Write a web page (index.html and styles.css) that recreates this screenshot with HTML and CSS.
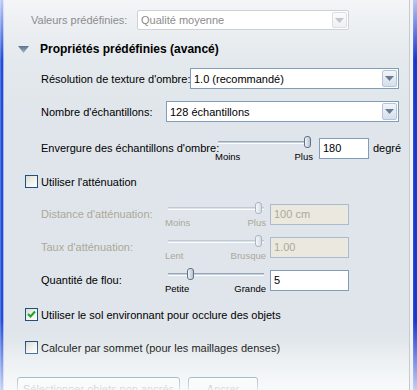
FILE: index.html
```html
<!DOCTYPE html>
<html lang="fr">
<head>
    <meta charset="UTF-8">
    <title>Propriétés prédéfinies</title>
    <link rel="stylesheet" href="styles.css">
</head>
<body>
    <div class="window">
        <div class="edge edge-left"></div>
        <div class="pane">

            <div class="row preset-row">
                <span class="label muted preset-label">Valeurs prédéfinies:</span>
                <div class="combo combo-off preset-combo">
                    <span class="combo-text">Qualité moyenne</span>
                    <span class="combo-btn"><svg width="9" height="5" viewBox="0 0 9 5"><polygon points="0,0 9,0 4.5,5" /></svg></span>
                </div>
            </div>

            <div class="section-head">
                <svg class="caret" width="11" height="7" viewBox="0 0 11 7">
                    <defs>
                        <linearGradient id="cg" x1="0" y1="0" x2="0" y2="1">
                            <stop offset="0" stop-color="#5c7290" />
                            <stop offset="1" stop-color="#a7b5c6" />
                        </linearGradient>
                    </defs>
                    <polygon points="0,0 11,0 5.5,7" fill="url(#cg)" />
                </svg>
                <span>Propriétés prédéfinies (avancé)</span>
            </div>

            <div class="row field-row res-row">
                <span class="label res-label">Résolution de texture d'ombre:</span>
                <div class="combo res-combo">
                    <span class="combo-text">1.0 (recommandé)</span>
                    <span class="combo-btn"><svg width="9" height="5" viewBox="0 0 9 5"><polygon points="0,0 9,0 4.5,5" /></svg></span>
                </div>
            </div>

            <div class="row field-row count-row">
                <span class="label count-label">Nombre d'échantillons:</span>
                <div class="combo count-combo">
                    <span class="combo-text">128 échantillons</span>
                    <span class="combo-btn"><svg width="9" height="5" viewBox="0 0 9 5"><polygon points="0,0 9,0 4.5,5" /></svg></span>
                </div>
            </div>

            <div class="slider-row spread-row">
                <span class="label spread-label">Envergure des échantillons d'ombre:</span>
                <div class="slider spread-slider">
                    <div class="track"><span class="thumb" style="left: 86px"></span></div>
                    <div class="ticks"><span>Moins</span><span>Plus</span></div>
                </div>
                <div class="textbox spread-box">180</div>
                <span class="unit">degré</span>
            </div>

            <div class="check-row falloff-check">
                <span class="checkbox"></span>
                <span>Utiliser l'atténuation</span>
            </div>

            <div class="slider-row off distance-row">
                <span class="label short-label">Distance d'atténuation:</span>
                <div class="slider">
                    <div class="track"><span class="thumb" style="left: 87px"></span></div>
                    <div class="ticks"><span>Moins</span><span>Plus</span></div>
                </div>
                <div class="textbox">100 cm</div>
            </div>

            <div class="slider-row off rate-row">
                <span class="label short-label">Taux d'atténuation:</span>
                <div class="slider">
                    <div class="track"><span class="thumb" style="left: 87px"></span></div>
                    <div class="ticks"><span>Lent</span><span>Brusque</span></div>
                </div>
                <div class="textbox">1.00</div>
            </div>

            <div class="slider-row blur-row">
                <span class="label short-label">Quantité de flou:</span>
                <div class="slider">
                    <div class="track"><span class="thumb" style="left: 19px"></span></div>
                    <div class="ticks"><span>Petite</span><span>Grande</span></div>
                </div>
                <div class="textbox">5</div>
            </div>

            <div class="check-row ground-check">
                <span class="checkbox checked">
                    <svg width="11" height="11" viewBox="0 0 11 11"><polyline points="2,5 4.5,7.5 9,2.5" fill="none" stroke="#21a121" stroke-width="2" /></svg>
                </span>
                <span>Utiliser le sol environnant pour occlure des objets</span>
            </div>

            <div class="check-row vertex-check">
                <span class="checkbox"></span>
                <span>Calculer par sommet (pour les maillages denses)</span>
            </div>

            <div class="button-row">
                <button class="xp-button wide">Sélectionner objets non ancrés</button>
                <button class="xp-button">Ancrer</button>
            </div>
        </div>
        <div class="divider"></div>
        <div class="edge edge-right"></div>
    </div>
</body>
</html>
```

FILE: styles.css
```css
body {
    margin: 0;
    font-family: "Liberation Sans", Arial, sans-serif;
    font-size: 11px;
    color: #000;
    background: #fff;
}
.window {
    display: flex;
    width: 417px;
    height: 390px;
    overflow: hidden;
}
.edge {
    width: 4px;
    flex: none;
}
.edge-left {
    background: linear-gradient(to right, #7e9be6 0, #2452dc 1px, #1f47d4 3px, #9fb3ee 3px);
}
.edge-left,
.edge-right {
    position: relative;
}
.edge-left::after,
.edge-right::after {
    content: "";
    position: absolute;
    left: 0;
    right: 0;
    top: 0;
    bottom: 0;
    background: linear-gradient(to bottom, rgba(255,255,255,0.7) 0, rgba(255,255,255,0) 60px, rgba(255,255,255,0) 320px, rgba(255,255,255,0.75) 390px);
}
.edge-right {
    background: linear-gradient(to right, #3456de 0, #1234c8 2px, #1a3bcf 4px);
}
.divider {
    width: 4px;
    flex: none;
    border-left: 1px solid #c6cbd0;
    box-sizing: border-box;
    background: #f1f3f5;
}
.pane {
    position: relative;
    flex: 1;
    background: linear-gradient(to bottom, #f3f5f7 0, #e4e9ed 60px, #dfe5ea 120px, #dfe5ea 330px, #e6ebee 360px);
    padding-top: 10px;
}
.pane::after {
    content: "";
    position: absolute;
    left: 0;
    right: 0;
    bottom: 0;
    height: 48px;
    background: linear-gradient(to bottom, rgba(250,251,252,0) 0, rgba(250,251,252,0.9) 100%);
    pointer-events: none;
}

/* rows */
.row {
    display: flex;
    align-items: center;
}
.label {
    flex: none;
    white-space: nowrap;
}
.muted {
    color: #8c8c8c;
}
.preset-row {
    height: 20px;
    margin-left: 27px;
}
.preset-label {
    width: 106px;
}
.section-head {
    display: flex;
    align-items: center;
    height: 14px;
    margin-top: 12px;
    margin-left: 14px;
    font-weight: bold;
    font-size: 12px;
}
.caret {
    margin-right: 11px;
    margin-top: 1px;
}
.field-row {
    height: 21px;
    margin-left: 37px;
}
.res-row {
    margin-top: 12px;
}
.res-label {
    width: 149px;
}
.count-row {
    margin-top: 12px;
}
.count-label {
    width: 125px;
}

/* combo boxes */
.combo {
    display: flex;
    align-items: center;
    height: 100%;
    box-sizing: border-box;
    border: 1px solid #7f9db9;
    background: #fff;
    padding: 1px;
}
.combo-text {
    flex: 1;
    padding-left: 2px;
}
.combo-btn {
    display: flex;
    align-items: center;
    justify-content: center;
    width: 15px;
    height: 100%;
    box-sizing: border-box;
    border: 1px solid #b6c4d6;
    border-radius: 2px;
    background: linear-gradient(to bottom, #f2f5fa, #d5dfea);
    fill: #6b7b92;
}
.res-combo {
    width: 209px;
}
.count-combo {
    width: 233px;
}
.preset-combo {
    width: 212px;
}
.combo-off {
    border-color: #cfd2d4;
    border-radius: 2px;
    color: #8c8c8c;
}
.combo-off .combo-btn {
    border-color: #dcdfe2;
    background: linear-gradient(to bottom, #fbfbfb, #eef0f2);
    fill: #c2c6ca;
}

/* sliders */
.slider-row {
    display: flex;
    align-items: flex-start;
    height: 26px;
    margin-left: 37px;
}
.slider-row .label {
    padding-top: 6px;
}
.spread-row {
    margin-top: 14px;
}
.spread-label {
    width: 174px;
}
.short-label {
    width: 124px;
}
.slider {
    flex: none;
    width: 101px;
}
.spread-slider {
    width: 98px;
}
.track {
    position: relative;
    height: 3px;
    margin: 5px 2px 0 3px;
    box-sizing: border-box;
    border-top: 1px solid #98a8ba;
    border-bottom: 1px solid #fbfcfd;
    background: #c3ceda;
}
.thumb {
    position: absolute;
    top: -6px;
    width: 7px;
    height: 12px;
    box-sizing: border-box;
    border: 1px solid #5f7189;
    border-radius: 3px;
    background: linear-gradient(to right, #f3f5f8, #b4c1d0);
}
.ticks {
    display: flex;
    justify-content: space-between;
    margin-top: 8px;
    font-size: 9.5px;
    line-height: 10px;
}
.textbox {
    flex: none;
    width: 79px;
    height: 21px;
    margin-top: 2px;
    margin-left: 4px;
    box-sizing: border-box;
    border: 1px solid #7f9db9;
    background: #fff;
    padding: 3px 0 0 3px;
}
.spread-box {
    width: 50px;
    margin-left: 6px;
}
.unit {
    margin-left: 4px;
    padding-top: 6px;
}
.off {
    color: #aca899;
}
.off .textbox {
    background: #ebe9df;
    border-color: #a9bccf;
}
.off .track {
    border-top-color: #c1cad4;
    background: #dde3e9;
}
.off .thumb {
    border-color: #aab6c3;
    background: linear-gradient(to right, #f6f7f9, #d6dde5);
}
.distance-row {
    margin-top: 14px;
}
.rate-row,
.blur-row {
    margin-top: 7px;
}

/* check boxes */
.check-row {
    display: flex;
    align-items: center;
    height: 13px;
    margin-left: 21px;
}
.checkbox {
    display: flex;
    align-items: center;
    justify-content: center;
    flex: none;
    width: 13px;
    height: 13px;
    box-sizing: border-box;
    border: 1px solid #1c5180;
    background: linear-gradient(135deg, #dcdcd5 0, #f3f3f0 60%, #fff 100%);
    margin-right: 3px;
}
.falloff-check {
    margin-top: 13px;
}
.ground-check {
    margin-top: 14px;
}
.vertex-check {
    margin-top: 20px;
}

/* buttons */
.button-row {
    display: flex;
    gap: 8px;
    margin-top: 23px;
    margin-left: 13px;
}
.xp-button {
    height: 23px;
    width: 70px;
    padding: 0;
    font-family: inherit;
    font-size: 11px;
    color: #000;
    border: 1px solid #003c74;
    border-radius: 3px;
    background: linear-gradient(to bottom, #fff, #ece9d8);
}
.wide {
    width: 163px;
}
```
